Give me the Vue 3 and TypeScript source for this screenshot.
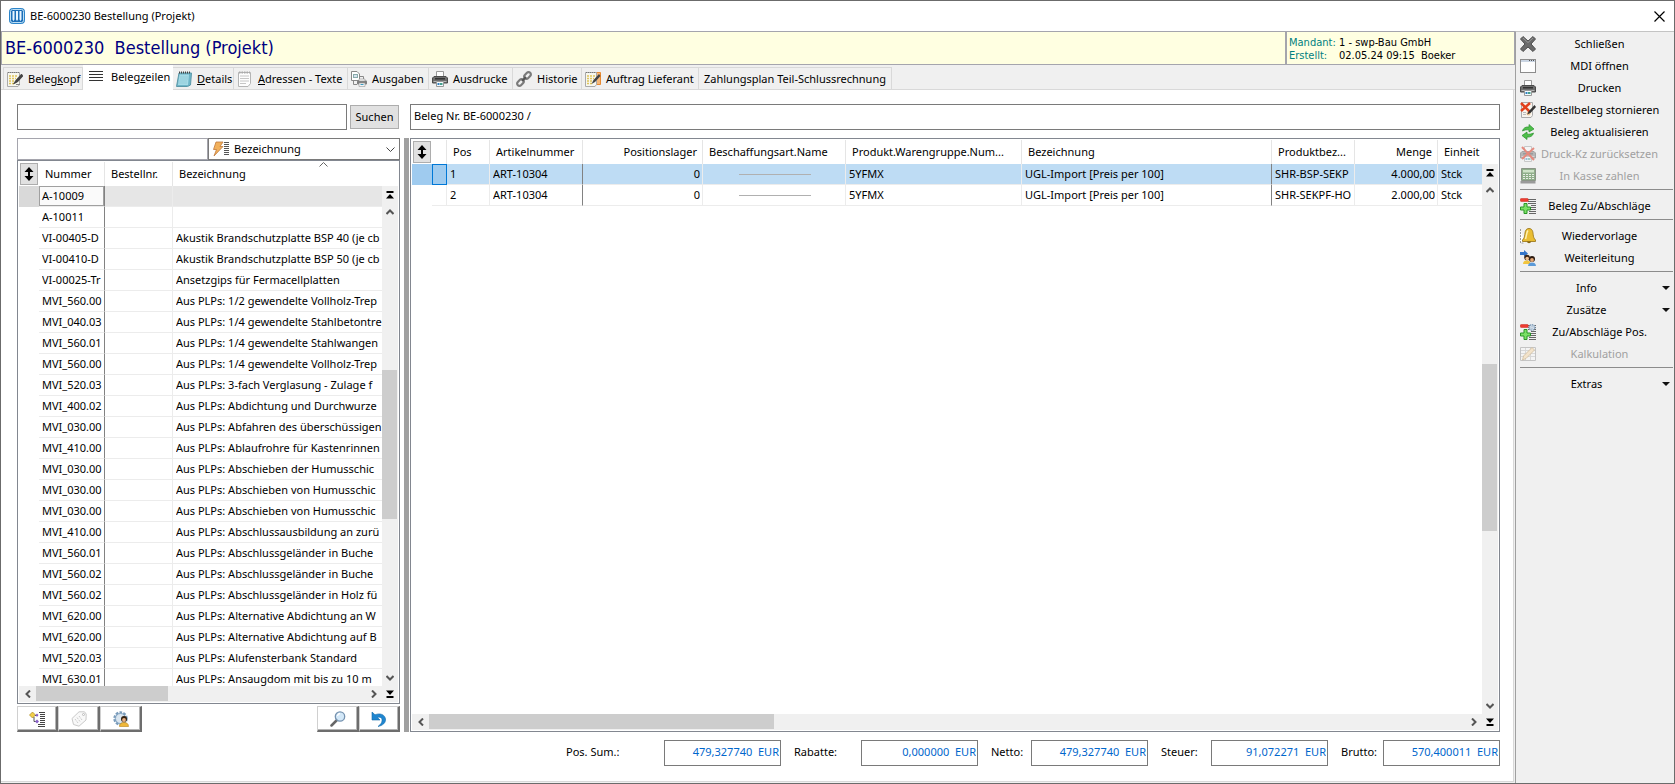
<script setup lang="ts">
import { ref } from 'vue'

interface Tab { pre: string; key: string; post: string; icon?: string; width: number }
interface Column { label: string; width?: number; right?: boolean; dark?: boolean }
interface Action { label?: string; icon?: string; disabled?: boolean; menu?: boolean }

const tabs: Tab[] = [
  { pre: 'Beleg', key: 'k', post: 'opf', icon: 'note-pen', width: 80 },
  { pre: 'Beleg', key: 'z', post: 'eilen', icon: 'lines', width: 90 },
  { pre: '', key: 'D', post: 'etails', icon: 'notebook', width: 61 },
  { pre: '', key: 'A', post: 'dressen - Texte', icon: 'sheet', width: 114 },
  { pre: 'Ausgaben', key: '', post: '', icon: 'output', width: 81 },
  { pre: 'Ausdrucke', key: '', post: '', icon: 'printer', width: 84 },
  { pre: 'Historie', key: '', post: '', icon: 'chain', width: 69 },
  { pre: 'Auftrag Lieferant', key: '', post: '', icon: 'order', width: 117 },
  { pre: 'Zahlungsplan Teil-Schlussrechnung', key: '', post: '', width: 193 },
]
const activeTab = ref(1)

const articles: [string, string][] = [
  ['A-10009', ''],
  ['A-10011', ''],
  ['VI-00405-D', 'Akustik Brandschutzplatte BSP 40 (je cb'],
  ['VI-00410-D', 'Akustik Brandschutzplatte BSP 50 (je cb'],
  ['VI-00025-Tr', 'Ansetzgips für Fermacellplatten'],
  ['MVI_560.00', 'Aus PLPs: 1/2 gewendelte Vollholz-Trep'],
  ['MVI_040.03', 'Aus PLPs: 1/4 gewendelte Stahlbetontre'],
  ['MVI_560.01', 'Aus PLPs: 1/4 gewendelte Stahlwangen'],
  ['MVI_560.00', 'Aus PLPs: 1/4 gewendelte Vollholz-Trep'],
  ['MVI_520.03', 'Aus PLPs: 3-fach Verglasung - Zulage f'],
  ['MVI_400.02', 'Aus PLPs: Abdichtung und Durchwurze'],
  ['MVI_030.00', 'Aus PLPs: Abfahren des überschüssigen'],
  ['MVI_410.00', 'Aus PLPs: Ablaufrohre für Kastenrinnen'],
  ['MVI_030.00', 'Aus PLPs: Abschieben der Humusschic'],
  ['MVI_030.00', 'Aus PLPs: Abschieben von Humusschic'],
  ['MVI_030.00', 'Aus PLPs: Abschieben von Humusschic'],
  ['MVI_410.00', 'Aus PLPs: Abschlussausbildung an zurü'],
  ['MVI_560.01', 'Aus PLPs: Abschlussgeländer in Buche'],
  ['MVI_560.02', 'Aus PLPs: Abschlussgeländer in Buche'],
  ['MVI_560.02', 'Aus PLPs: Abschlussgeländer in Holz fü'],
  ['MVI_620.00', 'Aus PLPs: Alternative Abdichtung an W'],
  ['MVI_620.00', 'Aus PLPs: Alternative Abdichtung auf B'],
  ['MVI_520.03', 'Aus PLPs: Alufensterbank Standard'],
  ['MVI_630.01', 'Aus PLPs: Ansaugdom mit bis zu 10 m'],
]

const columns: Column[] = [
  { label: 'Pos', width: 43 },
  { label: 'Artikelnummer', width: 93, dark: true },
  { label: 'Positionslager', width: 120, right: true },
  { label: 'Beschaffungsart.Name', width: 143 },
  { label: 'Produkt.Warengruppe.Num...', width: 176 },
  { label: 'Bezeichnung', dark: true },
  { label: 'Produktbez...', width: 83 },
  { label: 'Menge', width: 83, right: true },
  { label: 'Einheit', width: 44 },
]
const positions: string[][] = [
  ['1', 'ART-10304', '0', '', '5YFMX', 'UGL-Import [Preis per 100]', 'SHR-BSP-SEKP', '4.000,00', 'Stck'],
  ['2', 'ART-10304', '0', '', '5YFMX', 'UGL-Import [Preis per 100]', 'SHR-SEKPF-HO', '2.000,00', 'Stck'],
]

const totals = [
  { id: 'pos', label: 'Pos. Sum.:', value: '479,327740  EUR', width: 98 },
  { id: 'rabatte', label: 'Rabatte:', value: '0,000000  EUR', width: 67 },
  { id: 'netto', label: 'Netto:', value: '479,327740  EUR', width: 40 },
  { id: 'steuer', label: 'Steuer:', value: '91,072271  EUR', width: 50 },
  { id: 'brutto', label: 'Brutto:', value: '570,400011  EUR', width: 42 },
]

const groups: Action[][] = [
  [
    { label: 'Schließen', icon: 'cross' },
    { label: 'MDI öffnen', icon: 'window' },
    { label: 'Drucken', icon: 'printer' },
    { label: 'Bestellbeleg stornieren', icon: 'cancel-note' },
    { label: 'Beleg aktualisieren', icon: 'refresh' },
    { label: 'Druck-Kz zurücksetzen', icon: 'printer-x', disabled: true },
    { label: 'In Kasse zahlen', icon: 'register', disabled: true },
  ],
  [{ label: 'Beleg Zu/Abschläge', icon: 'plusminus' }],
  [
    { label: 'Wiedervorlage', icon: 'bell' },
    { label: 'Weiterleitung', icon: 'forward' },
  ],
  [
    { label: 'Info', menu: true },
    { label: 'Zusätze', menu: true },
    { label: 'Zu/Abschläge Pos.', icon: 'plusminus-gear' },
    { label: 'Kalkulation', icon: 'calc', disabled: true },
  ],
  [{ label: 'Extras', menu: true }],
]

const search = ref('')
const filter = ref('')
const documentNo = ref('Beleg Nr. BE-6000230 /')
</script>

<template>
  <svg class="sprite" aria-hidden="true">
    <symbol id="product" viewBox="0 0 16 16">
      <rect x=".5" y=".5" width="15" height="15" rx="3" fill="#1d6fb8" stroke="#2b84c9" />
      <rect x="1.5" y="1.5" width="13" height="13" rx="2" fill="none" stroke="#bfe0f5" />
      <path d="M3.500 3h2v8.500l-1 1.500-1-1.500zM7 3h2v8.500l-1 1.500-1-1.500zM10.500 3h2v8.500l-1 1.500-1-1.500z" fill="#e9f6ff" />
    </symbol>
    <symbol id="note-pen" viewBox="0 0 16 16">
      <path d="M.5 1.500h12v12l-1.500 2H.5z" fill="#f7f7ef" stroke="#aaa" />
      <path d="M1 1.500h11" stroke="#777" stroke-dasharray="1 1" />
      <path d="M2 5h8M2 7.500h7M2 10h5M2 12.500h5" stroke="#e0c45a" stroke-width="1.500" stroke-dasharray="2 1" />
      <path d="M14.500 3 9 9l-2.500 4 4-2L16 5z" fill="#444" stroke="#222" stroke-width=".5" />
      <path d="M9 13.500h4" stroke="#888" />
    </symbol>
    <symbol id="lines" viewBox="0 0 16 16">
      <path d="M1 2.500h14M1 5.500h14M1 8.500h14M1 11.500h14" stroke="#333" />
    </symbol>
    <symbol id="notebook" viewBox="0 0 16 16">
      <path d="M3 2h12.500l-1 12-3 1.500H.5z" fill="#6fb5c8" stroke="#5b98a8" />
      <path d="M3.500 3.500h9.500l-1 10.500H2z" fill="#a5dbe7" />
      <path d="M3 1.500h12" stroke="#444" stroke-width="2" stroke-dasharray="1 1" />
      <path d="M4 6h8M4 8h8M3 10h8M3 12h8" stroke="#8fc9d6" stroke-width=".7" />
    </symbol>
    <symbol id="sheet" viewBox="0 0 16 16">
      <path d="M1.500 1.500h12v11l-2.500 3H1.500z" fill="#fdfdfd" stroke="#b5b5b5" />
      <path d="M2 1.500h11" stroke="#aaa" stroke-width="2" stroke-dasharray="1.500 1" />
      <path d="M3 5h9M3 7.500h9M3 10h9M3 12.500h6" stroke="#c6c6c6" />
    </symbol>
    <symbol id="output" viewBox="0 0 16 16">
      <path d="M.5.500h5.500l2.500 2.500v6.500h-8z" fill="#fff" stroke="#888" />
      <rect x="2.500" y="3.500" width="4" height="3" fill="#d7e3ee" stroke="#8aa" />
      <path d="M9 5.500h3.500v3" fill="none" stroke="#888" />
      <path d="M2.500 10v3.500H6" fill="none" stroke="#888" />
      <rect x="6" y="9.500" width="10" height="4" rx="1" fill="#7d7d7d" />
      <path d="M8 8h6v2H8zM8 12h6v3.500H8z" fill="#f2f2f2" stroke="#999" stroke-width=".6" />
      <path d="M9.500 13.500h3" stroke="#3a9bc1" />
    </symbol>
    <symbol id="printer" viewBox="0 0 16 16">
      <path d="M4.500.500h7v5h-7z" fill="#fdfdfd" stroke="#999" />
      <path d="M2 5.500h12l1.500 1.500v5H.500V7z" fill="#6e6e6e" stroke="#4b4b4b" />
      <path d="M3 7h10v1.500H3z" fill="#333" />
      <path d="M1.500 10.500h13" stroke="#b5b5b5" />
      <path d="M4.500 10.500h7v5h-7z" fill="#f5fbfd" stroke="#999" />
      <path d="M5.500 12h2v2h-2z" fill="#2f7fc1" /><path d="M8 12h2.500v2H8z" fill="#44a08d" />
    </symbol>
    <symbol id="chain" viewBox="0 0 16 16">
      <g fill="none" stroke="#7b7b7b" stroke-width="2.200">
        <rect x="-3.800" y="-2.300" width="7.600" height="4.600" rx="2.300" transform="translate(11.500 4.500) rotate(-45)" />
        <rect x="-3.800" y="-2.300" width="7.600" height="4.600" rx="2.300" transform="translate(4.500 11.500) rotate(-45)" />
        <path d="m6 10 4-4" stroke="#555" />
      </g>
    </symbol>
    <symbol id="order" viewBox="0 0 16 16">
      <path d="M6 1.500h9.500v12H6z" fill="#f6b878" stroke="#e8892f" />
      <path d="M.5 1.500h11v12l-1.500 2H.5z" fill="#f7f7ef" stroke="#aaa" />
      <path d="M1 1.500h10" stroke="#777" stroke-dasharray="1 1" />
      <path d="M2 5h8M2 7.500h7M2 10h5M2 12.500h5" stroke="#e0c45a" stroke-width="1.500" stroke-dasharray="2 1" />
      <path d="M14 3 8.500 9l-2 4 3.500-2L15.500 5z" fill="#444" />
    </symbol>
    <symbol id="cross" viewBox="0 0 16 16">
      <path d="M3 .500 8 5l5-4.500L15.500 3 11 8l4.500 5-2.500 2.500L8 11l-5 4.500L.500 13 5 8 .500 3z" fill="#6b6b6b" stroke="#4e4e4e" />
      <path d="M3 2 8 6.500 13 2" fill="none" stroke="#999" />
    </symbol>
    <symbol id="window" viewBox="0 0 16 16">
      <rect x=".5" y="1.500" width="15" height="13" fill="#fdfdfd" stroke="#8c8c8c" />
      <path d="M1 3h14" stroke="#c9d4e2" stroke-width="2" /><path d="M9 2.500h5" stroke="#555" stroke-dasharray="1 1" />
    </symbol>
    <symbol id="cancel-note" viewBox="0 0 16 16">
      <path d="M1.500.500h11v13l-1.500 2H1.500z" fill="#f7f4ee" stroke="#aaa" />
      <path d="M3 12.500h3M3 10.500h3" stroke="#bbb" /><circle cx="8.500" cy="11.500" r="2" fill="#f0c89a" />
      <path d="m1 1 9 9M10 1 1 9" stroke="#e2401c" stroke-width="2.500" />
      <path d="m14.500 3-5.500 6-2 3.500 3.500-1.500L16 5z" fill="#333" />
    </symbol>
    <symbol id="refresh" viewBox="0 0 16 16">
      <path d="M2.500 7C3 4 6 2.500 9 3V.500L14 5 9 8V6C6.500 5.500 4.500 6 2.500 7z" fill="#4fbf4a" stroke="#2d8f2f" stroke-width=".7" />
      <path d="M13.500 9c-.5 3-3.500 4.500-6.500 4v2.500L2 11.500 7 8v2c2.500.5 4.500 0 6.500-1z" fill="#4fbf4a" stroke="#2d8f2f" stroke-width=".7" />
    </symbol>
    <symbol id="printer-x" viewBox="0 0 16 16">
      <use href="#printer" opacity=".45" />
      <path d="m2 1 12 13M14 2 2 13" stroke="#e58a7e" stroke-width="2" />
    </symbol>
    <symbol id="register" viewBox="0 0 16 16">
      <path d="M1.500.500h14v12h-14z" fill="#8fae8a" stroke="#8a9586" />
      <path d="M3 2h11v2.500H3z" fill="#cfe3c8" />
      <path d="M3 6.500h11M3 8.500h11M3 10.500h11" stroke="#e7eee4" stroke-dasharray="2 1" />
      <path d="M.5 13h15v2.500H.5z" fill="#9a9a9a" />
    </symbol>
    <symbol id="plusminus" viewBox="0 0 16 16">
      <path d="M8 1.500h8M8 3.500h8M8 5.500h8M11 7.500h5M11 9.500h5M11 11.500h5M9 13.500h7M9 15.500h7" stroke="#666" />
      <rect x=".3" y=".5" width="8" height="3" rx="1" fill="#ee3b30" stroke="#c6281f" stroke-width=".5" />
      <path d="M4 5.500h3V9h3.500v3H7v3.500H4V12H.5V9H4z" fill="#7be066" stroke="#2b9627" />
    </symbol>
    <symbol id="plusminus-gear" viewBox="0 0 16 16">
      <use href="#plusminus" />
      <circle cx="12" cy="3.500" r="2.800" fill="#dbe6f0" stroke="#8ba4bd" stroke-width="1.500" stroke-dasharray="1.500 .6" />
      <circle cx="12" cy="3.500" r="1" fill="#fff" stroke="#8ba4bd" stroke-width=".6" />
    </symbol>
    <symbol id="bell" viewBox="0 0 16 16">
      <path d="M.5 1v14h4" fill="#fff" stroke="#999" stroke-dasharray="2 1" />
      <path d="M9 .500c3.500 0 4 3.500 4.200 6 .2 2.500.8 4 2.300 5.500v1.500h-13V12c1.500-1.500 2.100-3 2.300-5.500.2-2.500.7-6 4.200-6z" fill="#e9bd33" stroke="#94700f" stroke-width=".8" />
      <path d="M8 2.500C6.500 4 6.500 8 5.500 11" fill="none" stroke="#fff2b0" stroke-width="1.500" />
      <path d="M7 13.500h4a2 1.800 0 0 1-4 0z" fill="#8a6810" />
    </symbol>
    <symbol id="forward" viewBox="0 0 16 16">
      <path d="M0 2h4V0l4 3.500L4 7V5H0z" fill="#3576c9" />
      <circle cx="7" cy="7.500" r="2.800" fill="#3b2615" /><circle cx="7.200" cy="8.500" r="1.800" fill="#f0c090" />
      <path d="M3 14c0-2.500 2-3.500 4-3.500s3.500 1 3.500 3.500z" fill="#f2c53d" />
      <circle cx="12" cy="9" r="3" fill="#2b1a10" /><circle cx="12" cy="10" r="1.900" fill="#e3a877" />
      <path d="M8 16c0-2.500 2-3.500 4-3.500s4 1 4 3.500z" fill="#5c9ad8" />
    </symbol>
    <symbol id="calc" viewBox="0 0 16 16">
      <path d="M.5 1.500h15v13H.5z" fill="#f4f4f4" stroke="#c4c4c4" />
      <path d="M1 4.500h14M1 7.500h14M1 10.500h14M5.500 2v12M10.500 2v12" stroke="#d8d8d8" />
      <path d="m2.500 14 1-4L12 1.500l2.500 2.500L6 12.500z" fill="#f3e3cb" stroke="#cbb797" stroke-width=".7" />
    </symbol>
    <symbol id="bolt" viewBox="0 0 16 16">
      <path d="M3 1h7L7 5.500h3L1 15l2.500-6.500H.5z" fill="#f2b15c" stroke="#c07a3c" stroke-width=".8" />
      <path d="M11 1.500h5M11 3.500h5M11 5.500h5M11 7.500h5M11 9.500h5M11 11.500h5M11 13.500h5" stroke="#555" />
    </symbol>
    <symbol id="tree" viewBox="0 0 16 16">
      <path d="M3.500 1 6.500 4 3.500 7 .5 4z" fill="#f2cf4a" stroke="#a98a22" stroke-width=".7" />
      <path d="M6 4.500h3M5 6v4.500h3" fill="none" stroke="#555" />
      <path d="m8 2.500 1.500 1.500L8 6 6.500 4zM8 8.500l2 2-2 2-2-2z" fill="#8a62c9" />
      <path d="M10 1.500h6M11 3.500h5M11 5.500h5M11 7.500h5M11 9.500h5M11 11.500h5M9 13.500h7M9 15.500h7" stroke="#444" />
    </symbol>
    <symbol id="tag" viewBox="0 0 16 16">
      <path d="M8 .8 13.500.8 15.200 3 15 9 8 15.200 2.500 13.500 1 7.500z" fill="#f8f8f8" stroke="#c9c9c9" />
      <circle cx="12.500" cy="3.500" r="1" fill="#fff" stroke="#bbb" />
      <path d="m4 8 3 4M6 6.500l3 4M8 5l3 4" stroke="#ccc" stroke-dasharray="2 1" />
    </symbol>
    <symbol id="gear-user" viewBox="0 0 16 16">
      <circle cx="7.500" cy="7.500" r="6" fill="#c3d5e6" stroke="#7a9cbb" stroke-width="2.500" stroke-dasharray="2.500 1.300" />
      <circle cx="7.500" cy="7.500" r="5" fill="#d9e5ef" stroke="#7a9cbb" stroke-width=".8" />
      <circle cx="11" cy="8" r="3" fill="#33200f" /><circle cx="11" cy="9" r="1.900" fill="#e9b184" />
      <path d="M6.500 15.500c0-3 2-4 4.500-4s4.500 1 4.500 4z" fill="#f0b83a" stroke="#b98416" stroke-width=".6" />
    </symbol>
    <symbol id="lens" viewBox="0 0 16 16">
      <path d="m6.500 9.500-5 5" stroke="#666" stroke-width="2.500" stroke-linecap="round" />
      <circle cx="10" cy="5.500" r="4.700" fill="#d3e8f8" stroke="#7693b0" stroke-width="1.300" />
      <path d="M7.500 5A3 3 0 0 1 10 2.500" fill="none" stroke="#fff" stroke-width="1.300" />
    </symbol>
    <symbol id="undo" viewBox="0 0 16 16">
      <path d="M1 1v8h8L6.500 6.500C9.500 5.500 11.500 7 11 10c-.3 2-1.500 3.500-4 5.500 5-1 8-4 7.500-7.500C14 4 9.500 1.500 4 3.800z" fill="#1f86d0" stroke="#126aa9" stroke-width=".6" />
    </symbol>
    <symbol id="updown" viewBox="0 0 10 14">
      <path d="M5 0 9.500 5H6v4h3.500L5 14 .5 9H4V5H.5z" fill="#000" />
    </symbol>
    <symbol id="up" viewBox="0 0 8 8"><path d="M.5 6 4 2.500 7.500 6" fill="none" stroke="#555" stroke-width="2" /></symbol>
    <symbol id="down" viewBox="0 0 8 8"><path d="M.5 2 4 5.500 7.500 2" fill="none" stroke="#555" stroke-width="2" /></symbol>
    <symbol id="left" viewBox="0 0 8 8"><path d="M6 .5 2.500 4 6 7.500" fill="none" stroke="#555" stroke-width="2" /></symbol>
    <symbol id="right" viewBox="0 0 8 8"><path d="M2 .5 5.500 4 2 7.500" fill="none" stroke="#555" stroke-width="2" /></symbol>
    <symbol id="first" viewBox="0 0 8 8"><path d="M.5 0h7v2h-7zM4 3l4 4.500H0z" fill="#000" /></symbol>
    <symbol id="last" viewBox="0 0 8 8"><path d="M.5 6h7v2h-7zM4 5 0 .5h8z" fill="#000" /></symbol>
  </svg>

  <div class="window">
    <header class="titlebar">
      <svg class="icon"><use href="#product" /></svg>
      <span class="caption">BE-6000230 Bestellung (Projekt)</span>
      <button class="close" type="button" aria-label="Fenster schließen">
        <svg viewBox="0 0 11 11"><path d="m.5.5 10 10M10.500.5l-10 10" stroke="#000" stroke-width="1.200" /></svg>
      </button>
    </header>

    <div class="body">
      <main class="main">
        <div class="banner">
          <h1>BE-6000230&nbsp; Bestellung (Projekt)</h1>
          <dl>
            <dt>Mandant:</dt><dd>1 - swp-Bau GmbH</dd>
            <dt>Erstellt:</dt><dd>02.05.24 09:15&nbsp; Boeker</dd>
          </dl>
        </div>

        <nav class="tabs" role="tablist">
          <button
            v-for="(t, i) in tabs" :key="t.pre + t.key" type="button" role="tab"
            class="tab" :class="{ active: i === activeTab }" :aria-selected="i === activeTab"
            :style="{ width: t.width + 'px' }" @click="activeTab = i"
          >
            <svg v-if="t.icon" class="icon"><use :href="'#' + t.icon" /></svg>
            <span>{{ t.pre }}<u v-if="t.key">{{ t.key }}</u>{{ t.post }}</span>
          </button>
        </nav>

        <section class="page">
          <div class="searchbar">
            <form class="search" @submit.prevent>
              <input v-model="search" class="box" type="text" aria-label="Suchbegriff">
              <button class="find" type="submit">Suchen</button>
            </form>
            <input v-model="documentNo" class="box document" type="text" aria-label="Beleg">
          </div>

          <div class="panes">
            <div class="articles">
              <div class="filter">
                <input v-model="filter" type="text" aria-label="Filter">
                <div class="combo">
                  <svg class="icon"><use href="#bolt" /></svg>
                  <select aria-label="Suchfeld"><option>Bezeichnung</option></select>
                  <svg class="chevron" viewBox="0 0 9 5"><path d="m.5.5 4 4 4-4" fill="none" stroke="#444" /></svg>
                </div>
              </div>

              <div class="grid">
                <div class="view">
                  <table class="article-table">
                    <colgroup><col class="c-handle"><col class="c-number"><col class="c-order"><col class="c-name"></colgroup>
                    <thead>
                      <tr>
                        <th class="handle"><button type="button" aria-label="Zeilenhöhe"><svg><use href="#updown" /></svg></button></th>
                        <th>Nummer</th>
                        <th>Bestellnr.</th>
                        <th class="sorted">Bezeichnung<svg viewBox="0 0 9 5"><path d="m.5 4.500 4-4 4 4" fill="none" stroke="#666" /></svg></th>
                      </tr>
                    </thead>
                    <tbody>
                      <tr v-for="(a, i) in articles" :key="i" :class="{ current: i === 0 }">
                        <td class="handle"></td>
                        <td class="number dark"><div>{{ a[0] }}</div></td>
                        <td></td>
                        <td><div>{{ a[1] }}</div></td>
                      </tr>
                    </tbody>
                  </table>
                </div>
                <div class="vbar">
                  <button type="button" aria-label="Zum Anfang"><svg><use href="#first" /></svg></button>
                  <button type="button" aria-label="Nach oben"><svg><use href="#up" /></svg></button>
                  <div class="track"><i class="gap"></i><i class="thumb"></i><i class="gap"></i></div>
                  <button type="button" aria-label="Nach unten"><svg><use href="#down" /></svg></button>
                </div>
                <div class="hbar">
                  <button type="button" aria-label="Nach links"><svg><use href="#left" /></svg></button>
                  <div class="track"><i class="thumb two"></i><i class="gap three"></i></div>
                  <button type="button" aria-label="Nach rechts"><svg><use href="#right" /></svg></button>
                </div>
                <button class="corner" type="button" aria-label="Zum Ende"><svg><use href="#last" /></svg></button>
              </div>

              <div class="tools">
                <button type="button" aria-label="Struktur"><svg class="icon"><use href="#tree" /></svg></button>
                <button type="button" aria-label="Etikett" disabled><svg class="icon"><use href="#tag" /></svg></button>
                <button type="button" aria-label="Benutzereinstellungen"><svg class="icon"><use href="#gear-user" /></svg></button>
                <span class="spacer"></span>
                <button type="button" aria-label="Suchen"><svg class="icon"><use href="#lens" /></svg></button>
                <button type="button" aria-label="Zurücksetzen"><svg class="icon"><use href="#undo" /></svg></button>
              </div>
            </div>

            <div class="splitter" role="separator"></div>

            <div class="grid positions">
              <div class="view">
                <table class="position-table">
                  <colgroup>
                    <col class="c-handle"><col class="c-mark">
                    <col v-for="c in columns" :key="c.label" :style="c.width ? { width: c.width + 'px' } : {}">
                  </colgroup>
                  <thead>
                    <tr>
                      <th class="handle"><button type="button" aria-label="Zeilenhöhe"><svg><use href="#updown" /></svg></button></th>
                      <th></th>
                      <th v-for="c in columns" :key="c.label" :class="{ right: c.right }">{{ c.label }}</th>
                    </tr>
                  </thead>
                  <tbody>
                    <tr v-for="(row, i) in positions" :key="i" :class="{ selected: i === 0 }">
                      <td class="handle"></td>
                      <td class="mark"></td>
                      <td v-for="(value, k) in row" :key="k" :class="{ right: columns[k].right, dark: columns[k].dark }">
                        <hr v-if="k === 3">
                        <div v-else>{{ value }}</div>
                      </td>
                    </tr>
                  </tbody>
                </table>
              </div>
              <div class="vbar">
                <button type="button" aria-label="Zum Anfang"><svg><use href="#first" /></svg></button>
                <button type="button" aria-label="Nach oben"><svg><use href="#up" /></svg></button>
                <div class="track"><i class="gap"></i><i class="thumb"></i><i class="gap"></i></div>
                <button type="button" aria-label="Nach unten"><svg><use href="#down" /></svg></button>
              </div>
              <div class="hbar">
                <button type="button" aria-label="Nach links"><svg><use href="#left" /></svg></button>
                <div class="track"><i class="thumb"></i><i class="gap two"></i></div>
                <button type="button" aria-label="Nach rechts"><svg><use href="#right" /></svg></button>
              </div>
              <button class="corner" type="button" aria-label="Zum Ende"><svg><use href="#last" /></svg></button>
            </div>
          </div>

          <div class="totals">
            <div v-for="t in totals" :key="t.id" class="total">
              <label :for="t.id" :style="{ width: t.width + 'px' }">{{ t.label }}</label>
              <input :id="t.id" class="box" type="text" :value="t.value" readonly>
            </div>
          </div>
        </section>
      </main>

      <aside class="actions">
        <div v-for="(group, g) in groups" :key="g" class="group">
          <button v-for="a in group" :key="a.label" type="button" class="action" :disabled="a.disabled">
            <svg v-if="a.icon" class="icon"><use :href="'#' + a.icon" /></svg>
            <span :class="{ inset: !a.menu }">{{ a.label }}</span>
            <svg v-if="a.menu" class="drop" viewBox="0 0 8 4"><path d="M0 0h8L4 4z" fill="#111" /></svg>
          </button>
        </div>
      </aside>
    </div>
  </div>
</template>

<style>
body { margin: 0; background: #fff; }
</style>

<style scoped>
.sprite { position: absolute; width: 0; height: 0; }
.window, .window button, .window input, .window select {
  font: 11px/16px "Noto Sans", "Open Sans", sans-serif;
  color: #000;
}
.window * { box-sizing: border-box; }
.window {
  box-sizing: border-box;
  display: flex;
  flex-direction: column;
  height: 100vh;
  min-height: 480px;
  border: 1px solid #6b6b6b;
  background: #f0f0f0;
}
button, input, select { margin: 0; padding: 0; border-radius: 0; }
button { border: 0; background: none; }
.icon { flex: none; width: 16px; height: 16px; display: block; }

.titlebar { display: flex; align-items: center; height: 30px; padding: 0 8px; background: #fff; flex: none; }
.caption { flex: 1; margin-left: 5px; }
.close { width: 14px; height: 20px; display: grid; place-items: center; }
.close svg { width: 11px; height: 11px; }

.body { flex: 1; display: flex; min-height: 0; }
.main { flex: 1; display: flex; flex-direction: column; min-width: 0; }

.banner { display: flex; flex: none; height: 34px; border: 1px solid #a5a5ad; background: #ffffe1; }
h1 {
  flex: 1; margin: 0; padding-left: 3px;
  font: 18px/31px "DejaVu Sans Condensed", "Noto Sans", sans-serif;
  color: #000080; white-space: nowrap;
}
dl {
  display: grid; grid-template-columns: 50px 1fr; grid-auto-rows: 13px; align-content: start;
  width: 229px; margin: 0; padding: 4px 0 0 2px; border-left: 2px solid #a5a5ad;
  font: 11px/13px "DejaVu Sans Condensed", "Noto Sans", sans-serif; white-space: nowrap;
}
dt { color: #008080; }
dd { margin: 0; }

.tabs { display: flex; flex: none; height: 25px; padding: 2px 0 0 2px; border-bottom: 1px solid #d9d9d9; }
.tab {
  display: flex; align-items: center; gap: 5px; height: 22px; padding: 0 0 0 3px;
  border: 1px solid #d9d9d9; border-width: 1px 1px 0 0; white-space: nowrap;
}
.tab:first-child { border-left-width: 1px; }
.tab:last-child { padding-left: 5px; }
.tab.active { gap: 7px; height: 25px; margin-top: -2px; padding: 0 0 3px 5px; border-color: transparent; background: #fff; }

.page {
  flex: 1; display: flex; flex-direction: column; gap: 8px; min-height: 0;
  margin: 0 1px 1px 0; padding: 14px 13px 15px 16px;
  border: 1px solid #d9d9d9; border-width: 0 1px 1px 0; background: #fff;
}
.box { height: 26px; border: 1px solid #7a7a7a; background: #fff; outline: 0; }
.searchbar { display: flex; gap: 11px; }
.search { display: flex; align-items: center; gap: 3px; width: 382px; flex: none; }
.search .box { flex: 1; min-width: 0; padding: 0 3px; }
.find { width: 49px; height: 24px; border: 1px solid #adadad; background: #e1e1e1; }
.document { flex: 1; min-width: 0; padding: 0 3px 3px; }

.panes { flex: 1; display: flex; min-height: 0; }
.articles { width: 383px; flex: none; display: flex; flex-direction: column; }
.splitter { flex: none; width: 5px; margin: 0 1px 0 4px; background: #a0a0a0; }
.filter { display: flex; height: 22px; flex: none; }
.filter input { width: 191px; height: 22px; border: 1px solid #a5a5ad; background: #fff; padding: 0 3px; }
.combo { flex: 1; display: flex; align-items: center; padding: 0 4px; border: 1px solid #7a7a7a; background: #fff; }
.combo select { flex: 1; min-width: 0; padding-left: 5px; border: 0; background: #fff; appearance: none; }
.chevron { width: 9px; height: 5px; flex: none; }

.grid {
  flex: 1; min-height: 0; min-width: 0;
  display: grid; grid-template: minmax(0, 1fr) 16px / minmax(0, 1fr) 16px;
  padding: 1px; border: 1px solid #828790; background: #fff;
}
.view { overflow: hidden; min-width: 0; }
table { border-collapse: separate; border-spacing: 0; table-layout: fixed; }
.article-table { width: 446px; }
.position-table { width: 100%; }
.c-handle { width: 20px; }
.c-number { width: 66px; }
.c-order { width: 68px; }
.c-name { width: 292px; }
.c-mark { width: 15px; }
th {
  height: 24px; padding: 0 5px 0 6px; border-right: 1px solid #e5e5e5;
  font-weight: 400; text-align: left; white-space: nowrap; position: relative;
}
th:last-child { padding-right: 0; border-right: 0; }
th.handle { padding: 0 1px 0 1px; border: 0; }
th.handle button { display: grid; place-items: center; width: 18px; height: 22px; border: 1px solid #adadad; background: #e1e1e1; }
th.handle svg { width: 10px; height: 14px; }
.sorted svg { position: absolute; top: 0; left: 50%; width: 9px; height: 5px; }
td { height: 21px; padding: 0 2px 0 3px; border: 1px solid #ececec; border-width: 0 1px 1px 0; }
td div { overflow: hidden; height: 18px; line-height: 18px; white-space: nowrap; }
td.handle { padding: 0; border: 0; }
td.dark { border-right-color: #828282; }
.right { text-align: right; }
.article-table td:last-child, .position-table td:last-child { border-right: 0; }
td.number { padding-right: 0; }
.current td { background: #e6e6e6; }
.current td.handle { background: #d9d9d9; }
.current td.number { padding-left: 0; }
.current td.number div { height: 20px; padding-left: 2px; border: 1px solid #a0a0a0; background: #fafafa; line-height: 17px; }
.selected td { background: #bedcf4; }
.selected td.handle { background: #9fcbef; }
.selected td.mark { border: 1px solid #0078d7; background: #9fcbef; }
hr { width: 72px; margin: 0 auto; border: 0; border-top: 1px solid #b0b0b0; }

.vbar, .hbar { display: flex; background: #f0f0f0; }
.vbar { flex-direction: column; margin-top: 24px; }
.vbar button, .hbar button { flex: 0 0 17px; display: grid; place-items: center; }
.vbar svg, .hbar svg, .corner svg { width: 8px; height: 8px; }
.track { flex: 1; display: flex; }
.vbar .track { flex-direction: column; padding-right: 1px; }
.hbar .track { padding-bottom: 1px; }
.gap, .thumb { flex: 1 1 0; }
.thumb { background: #cdcdcd; }
.two { flex-grow: 2; }
.three { flex-grow: 3; }
.corner { display: grid; place-items: center; background: #f0f0f0; }

.tools { display: flex; flex: none; height: 26px; margin-top: 2px; }
.tools button {
  display: grid; place-items: center; width: 42px; height: 26px; background: #fff;
  border: 1px solid #d0d0d0; border-right: 2px solid #6d6d6d; border-bottom: 2px solid #6d6d6d;
  box-shadow: inset -1px -1px #b4b4b4;
}
.tools button:first-child, .tools button:last-child { width: 41px; }
.spacer { flex: 1; }

.totals { display: flex; justify-content: flex-end; gap: 13px; flex: none; }
.total { display: flex; }
.total label { line-height: 24px; white-space: nowrap; }
.total .box { width: 117px; padding: 0 1px 3px 0; color: #0066cc; text-align: right; }

.actions { flex: none; width: 159px; padding: 1px 1px 0 4px; border-left: 1px solid #a0a0a0; border-top: 1px solid #c4c4c4; }
.group + .group::before { content: ""; display: block; height: 8px; background: linear-gradient(#8c8c8c, #8c8c8c) 0 2px / 100% 1px no-repeat; }
.action { display: flex; align-items: center; width: 100%; height: 22px; white-space: nowrap; }
.action span { flex: 1; text-align: center; }
.action .inset { padding-right: 10px; }
.action:disabled { color: #a0a0a0; }
.drop { width: 8px; height: 4px; margin: 0 3px 0 9px; }
</style>
